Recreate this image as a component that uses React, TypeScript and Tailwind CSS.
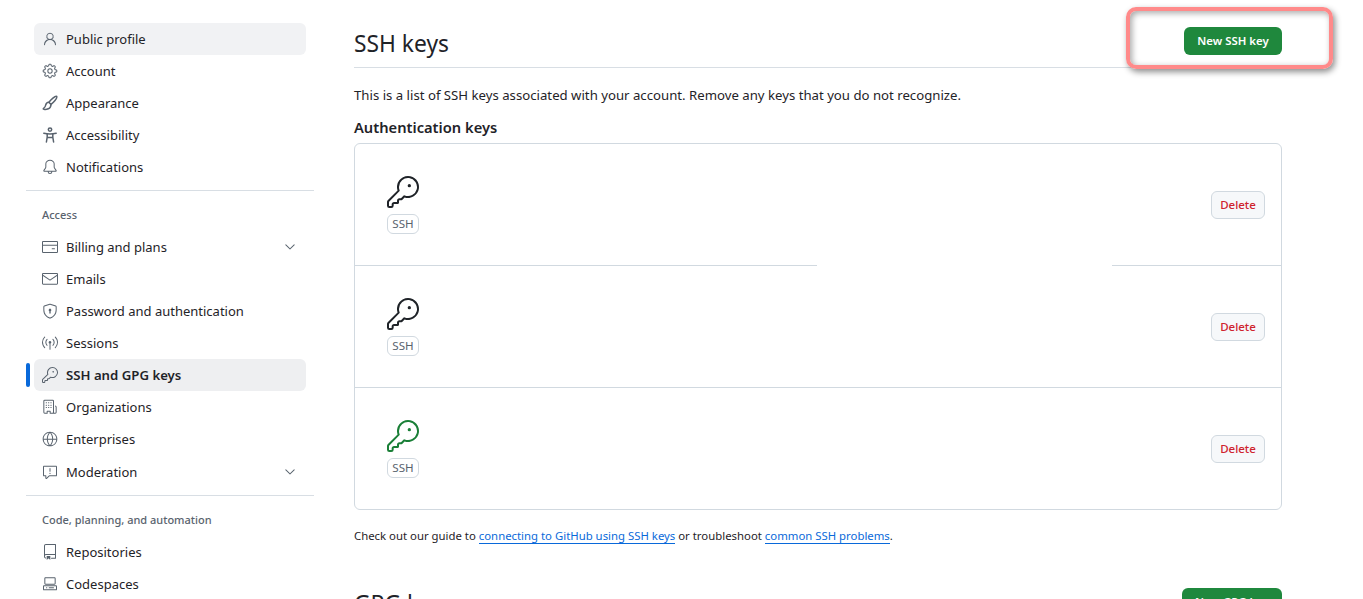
import type { ComponentType } from "react";
import {
  GoBell,
  GoBroadcast,
  GoChevronDown,
  GoCodespaces,
  GoCreditCard,
  GoGear,
  GoGlobe,
  GoKey,
  GoMail,
  GoOrganization,
  GoPerson,
  GoRepo,
  GoReport,
  GoShieldLock,
} from "react-icons/go";

type IconProps = { size?: number; className?: string };

// not in react-icons/go, drawn by hand
function PaintbrushIcon({ size = 16, className }: IconProps) {
  return (
    <svg width={size} height={size} viewBox="0 0 16 16" fill="none" stroke="currentColor" strokeWidth="1.5" strokeLinejoin="round" className={className}>
      <path d="M14.6 1.4c.7.7-.1 2.2-1.6 4-1.2 1.4-2.8 3-4 4L6.9 7.2c1-1.2 2.6-2.9 4-4.1 1.7-1.4 3-2.4 3.7-1.7Z" />
      <path d="M6.9 7.2C5.3 7.3 4 8.3 3.7 10c-.2 1.4-.8 2.6-2.4 3.6-.5 1 2.7 1.3 5 .2 1.7-.9 2.7-2.6 2.7-4.4" />
    </svg>
  );
}

function AccessibilityIcon({ size = 16, className }: IconProps) {
  return (
    <svg width={size} height={size} viewBox="0 0 16 16" fill="none" stroke="currentColor" strokeWidth="1.5" strokeLinecap="round" strokeLinejoin="round" className={className}>
      <circle cx="8" cy="2.6" r="1.7" />
      <path d="M1.8 6.2c2 .5 4.1.8 6.2.8s4.2-.3 6.2-.8" />
      <path d="M5.2 7v3.2L4.4 15M10.8 7v3.2l.8 4.8M5.2 10.5h5.6" />
    </svg>
  );
}

type NavItemProps = {
  icon: ComponentType<IconProps>;
  label: string;
  chevron?: boolean;
  hover?: boolean;
  active?: boolean;
};

function NavItem({ icon: Icon, label, chevron, hover, active }: NavItemProps) {
  return (
    <div className="relative">
      {active && <div className="absolute left-0 top-1 h-6 w-1 rounded-md bg-[#0969da]" />}
      <div
        className={`mx-2 flex h-8 items-center rounded-md pl-2 pr-2 text-[#1f2328] ${hover ? "bg-[#f1f2f4]" : ""} ${active ? "bg-[#eeeff1] text-[13.2px] font-semibold" : "text-[13px]"}`}
      >
        <Icon size={16} className="mr-2 text-[#59636e]" />
        <span className="flex-1 pt-[2px]">{label}</span>
        {chevron && <GoChevronDown size={16} className="text-[#59636e]" />}
      </div>
    </div>
  );
}

function SshKeyRow({ color, last, patch }: { color: string; last?: boolean; patch?: boolean }) {
  return (
    <div className={`relative flex items-center justify-between pl-8 pr-4 ${last ? "h-[121px]" : "h-[122px] border-b border-[#d1d9e0]"}`}>
      {patch && <div className="absolute bottom-[-1px] left-[462px] h-[1px] w-[295px] bg-white" />}
      <div className="flex flex-col items-center">
        <GoKey size={32} className={color} />
        <span className="mt-1.5 rounded-md border border-[#d1d9e0] px-1 text-[11.6px] leading-[18px] text-[#59636e]">SSH</span>
      </div>
      <button className="h-7 w-[54px] rounded-md border border-[#d1d9e0] bg-[#f6f8fa] text-[11.5px] font-medium text-[#cf222e]">
        Delete
      </button>
    </div>
  );
}

export default function App() {
  return (
    <div className="flex h-[599px] overflow-hidden bg-white font-['Noto_Sans',sans-serif] text-[#1f2328]">
      <aside className="ml-[26px] w-[288px] shrink-0 pt-[23px]">
        <NavItem icon={GoPerson} label="Public profile" hover />
        <NavItem icon={GoGear} label="Account" />
        <NavItem icon={PaintbrushIcon} label="Appearance" />
        <NavItem icon={AccessibilityIcon} label="Accessibility" />
        <NavItem icon={GoBell} label="Notifications" />
        <div className="mt-[7px] border-t border-[#d8dee4]" />
        <div className="flex h-10 items-center pl-4 pt-2 text-[11px] font-medium text-[#59636e]">Access</div>
        <NavItem icon={GoCreditCard} label="Billing and plans" chevron />
        <NavItem icon={GoMail} label="Emails" />
        <NavItem icon={GoShieldLock} label="Password and authentication" />
        <NavItem icon={GoBroadcast} label="Sessions" />
        <NavItem icon={GoKey} label="SSH and GPG keys" active />
        <NavItem icon={GoOrganization} label="Organizations" />
        <NavItem icon={GoGlobe} label="Enterprises" />
        <div className="mt-px">
          <NavItem icon={GoReport} label="Moderation" chevron />
        </div>
        <div className="mt-[7px] border-t border-[#d8dee4]" />
        <div className="flex h-10 items-center pl-4 pt-2 text-[11px] font-medium text-[#59636e]">Code, planning, and automation</div>
        <NavItem icon={GoRepo} label="Repositories" />
        <NavItem icon={GoCodespaces} label="Codespaces" />
      </aside>

      <main className="ml-10 w-[928px] shrink-0">
        <div className="relative flex h-[68px] items-center justify-between border-b border-[#d8dee4] pt-[14px]">
          <h2 className="mt-[7px] text-[22.8px] font-normal leading-none">SSH keys</h2>
          <button className="mt-[1px] h-7 w-[98px] rounded-md bg-[#1f883d] text-[11.4px] font-semibold text-white">New SSH key</button>
          <div className="absolute left-[772px] top-[7px] h-[62px] w-[207px] rounded-[10px] border-4 border-[#ff8a8a] shadow-[2px_3px_6px_rgba(0,0,0,0.45),inset_2px_2px_6px_rgba(0,0,0,0.35)]" />
        </div>
        <p className="mt-[18px] text-[13.2px] leading-[18px]">This is a list of SSH keys associated with your account. Remove any keys that you do not recognize.</p>
        <h3 className="mt-[14px] text-[14.7px] font-semibold leading-[18px]">Authentication keys</h3>
        <div className="mt-[7px] rounded-md border border-[#d1d9e0]">
          <SshKeyRow color="text-[#1f2328]" patch />
          <SshKeyRow color="text-[#1f2328]" />
          <SshKeyRow color="text-[#1a7f37]" last />
        </div>
        <p className="mt-[17px] text-[11.37px] leading-[18px]">
          Check out our guide to{" "}
          <a className="border-b border-[#0969da] text-[#0969da]">connecting to GitHub using SSH keys</a> or troubleshoot{" "}
          <a className="border-b border-[#0969da] text-[#0969da]">common SSH problems</a>.
        </p>
        <div className="mt-[43px] flex items-start justify-between">
          <h2 className="mt-[5px] text-[22.8px] font-normal leading-none">GPG keys</h2>
          <button className="h-7 w-[100px] rounded-md bg-[#1f883d] text-[11.4px] font-semibold text-white">New GPG key</button>
        </div>
      </main>
    </div>
  );
}
